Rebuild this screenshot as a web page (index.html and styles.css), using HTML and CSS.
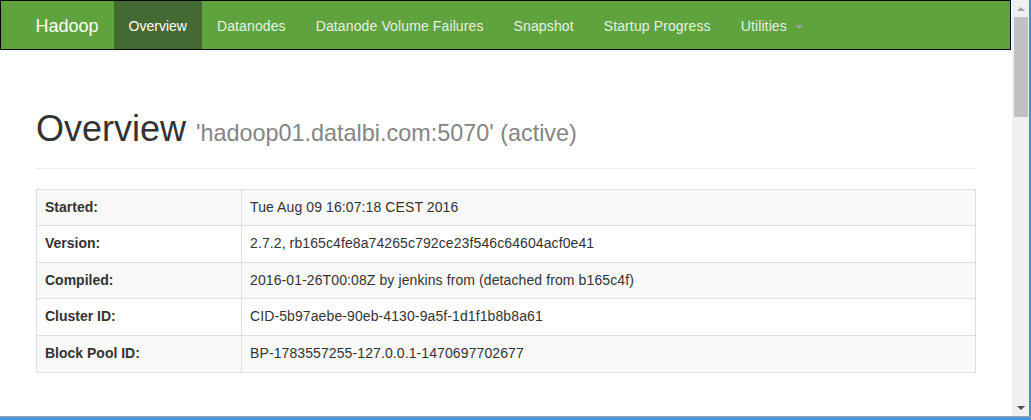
FILE: index.html
```
<!DOCTYPE html>
<html lang="en">
<head>
  <meta charset="UTF-8">
  <title>Namenode information</title>
  <link rel="stylesheet" href="styles.css">
</head>
<body>
  <div class="window">
    <div class="viewport">
      <header class="navbar">
        <div class="container navbar-inner">
          <a class="navbar-brand" href="#">Hadoop</a>
          <ul class="nav">
            <li class="active"><a href="#tab-overview">Overview</a></li>
            <li><a href="#tab-datanode">Datanodes</a></li>
            <li><a href="#tab-datanode-volume-failures">Datanode Volume Failures</a></li>
            <li><a href="#tab-snapshot">Snapshot</a></li>
            <li><a href="#tab-startup-progress">Startup Progress</a></li>
            <li><a href="#">Utilities <span class="caret"></span></a></li>
          </ul>
        </div>
      </header>

      <div class="container">
        <div class="page-header">
          <h1>Overview <small>'hadoop01.datalbi.com:5070' (active)</small></h1>
        </div>

        <table class="info">
          <tr><th>Started:</th><td>Tue Aug 09 16:07:18 CEST 2016</td></tr>
          <tr><th>Version:</th><td>2.7.2, rb165c4fe8a74265c792ce23f546c64604acf0e41</td></tr>
          <tr><th>Compiled:</th><td>2016-01-26T00:08Z by jenkins from (detached from b165c4f)</td></tr>
          <tr><th>Cluster ID:</th><td>CID-5b97aebe-90eb-4130-9a5f-1d1f1b8b8a61</td></tr>
          <tr><th>Block Pool ID:</th><td>BP-1783557255-127.0.0.1-1470697702677</td></tr>
        </table>
      </div>
    </div>

    <div class="scrollbar">
      <div class="arrow-up"></div>
      <div class="thumb"></div>
      <div class="track"></div>
      <div class="arrow-down"></div>
    </div>
    <div class="frame-right"></div>
  </div>
  <div class="frame-bottom"></div>
</body>
</html>
```

FILE: styles.css
```
body {
  margin: 0;
  font-family: 'Liberation Sans', Arial, sans-serif;
  font-size: 14px;
  line-height: 20px;
  color: #333;
  background-color: #fff;
  overflow: hidden;
}

.window {
  display: flex;
  height: 416px;
}

.viewport {
  width: 1012px;
  overflow: hidden;
}

.container {
  width: 940px;
  padding: 0 15px;
  margin: 0 auto;
}

/* navbar */
.navbar {
  width: 1009px;
  height: 48px;
  background-color: #5fa33e;
  border: 1px solid #080808;
}

.navbar-inner {
  display: flex;
}

.navbar-brand {
  margin-left: -15px;
  padding: 15px 15px 13px;
  font-size: 18px;
  line-height: 20px;
  color: #fff;
  text-decoration: none;
}

.nav {
  display: flex;
  margin: 0;
  padding: 0;
  list-style: none;
}

.nav a {
  display: block;
  padding: 15px 15px 13px;
  color: #e8f0e2;
  letter-spacing: 0.12px;
  text-decoration: none;
}

.nav .active a {
  background-color: #446a34;
  color: #fff;
  letter-spacing: 0;
}

.caret {
  display: inline-block;
  width: 0;
  height: 0;
  margin-left: 4px;
  vertical-align: middle;
  border-top: 4px solid #9d9d9d;
  border-left: 4px solid transparent;
  border-right: 4px solid transparent;
}

/* header */
.page-header {
  margin: 59px 0 20px;
  padding-bottom: 9px;
  border-bottom: 1px solid #eee;
}

.page-header h1 {
  margin: 0 0 10px;
  font-size: 36px;
  font-weight: 500;
  line-height: 1.1;
}

.page-header small {
  font-size: 65%;
  color: #858585;
}

/* table */
.info {
  width: 100%;
  border-collapse: collapse;
  border: 1px solid #ddd;
}

.info th,
.info td {
  padding: 8px;
  line-height: 19.6px;
  text-align: left;
  vertical-align: top;
  border: 1px solid #ddd;
}

.info th {
  width: 188px;
  font-weight: bold;
}

.info td {
  letter-spacing: 0.1px;
}

.info tr:nth-child(odd) {
  background-color: #f9f9f9;
}

/* window chrome */
.scrollbar {
  width: 17px;
  display: flex;
  flex-direction: column;
  background-color: #f0f0f0;
}

.arrow-up,
.arrow-down {
  height: 17px;
  display: flex;
  align-items: center;
  justify-content: center;
}

.arrow-up::after {
  content: "";
  border-bottom: 4px solid #a3a3a3;
  border-left: 4px solid transparent;
  border-right: 4px solid transparent;
}

.arrow-down::after {
  content: "";
  border-top: 4px solid #505050;
  border-left: 4px solid transparent;
  border-right: 4px solid transparent;
}

.thumb {
  height: 100px;
  margin: 0 1px 0 2px;
  background-color: #c1c1c1;
}

.track {
  flex: 1;
}

.frame-right {
  width: 2px;
  background-color: #3c8fdc;
}

.frame-bottom {
  height: 3px;
  border-top: 1px solid #a0a0a0;
  background-color: #4a98e2;
}
```
